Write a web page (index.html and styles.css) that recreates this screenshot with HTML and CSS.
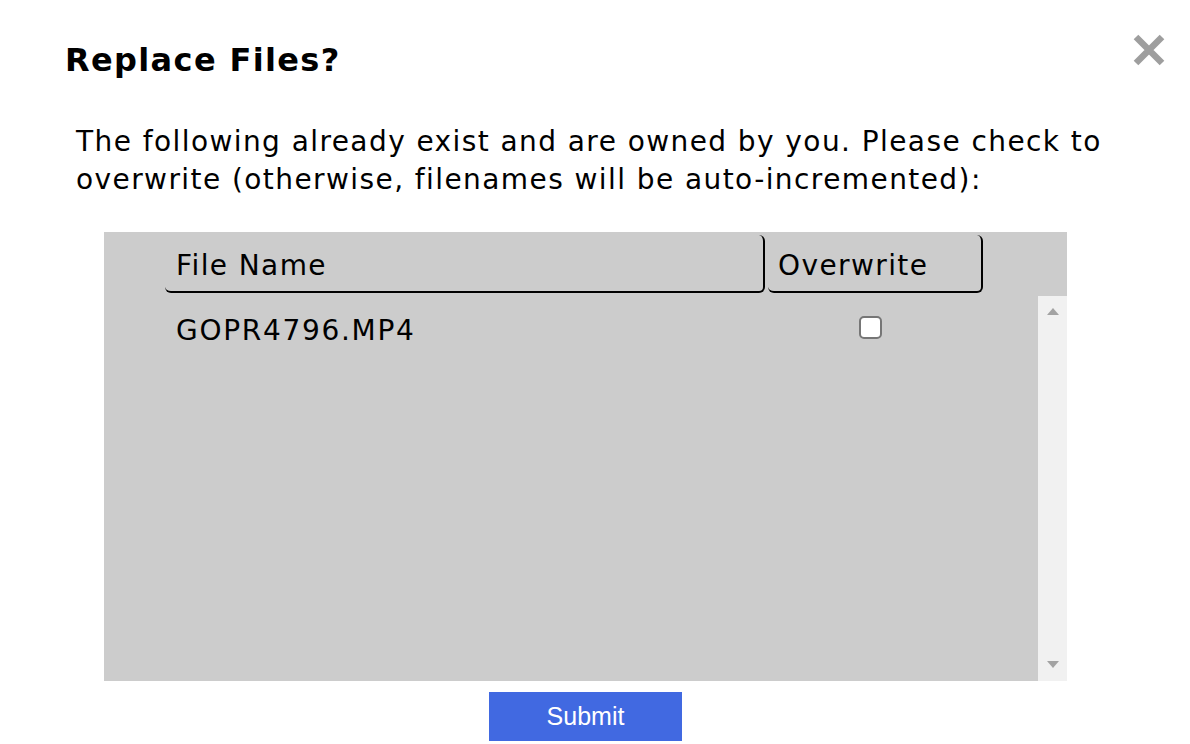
FILE: index.html
```html
<!DOCTYPE html>
<html lang="en">
<head>
<meta charset="utf-8">
<title>Replace Files?</title>
<link rel="stylesheet" href="styles.css">
</head>
<body>
<div class="dialog">
  <div class="dialog-header">
    <h1 class="dialog-title">Replace Files?</h1>
    <button class="close-btn" aria-label="Close">
      <svg width="34" height="34" viewBox="0 0 34 34"><path d="M4 4 L30 30 M30 4 L4 30" stroke="#9e9e9e" stroke-width="6.5" stroke-linecap="butt"/></svg>
    </button>
  </div>
  <p class="dialog-text">The following already exist and are owned by you. Please check to overwrite (otherwise, filenames will be auto-incremented):</p>
  <div class="panel">
    <div class="file-table">
      <div class="table-head">
        <div class="th th-name">File Name</div>
        <div class="th th-check">Overwrite</div>
      </div>
      <div class="table-body">
        <div class="rows">
          <div class="row">
            <div class="td td-name">GOPR4796.MP4</div>
            <div class="td td-check"><input type="checkbox" class="check"></div>
          </div>
        </div>
        <div class="scrollbar">
          <span class="arrow arrow-up"></span>
          <span class="arrow arrow-down"></span>
        </div>
      </div>
    </div>
    <div class="actions">
      <button class="submit-btn">Submit</button>
    </div>
  </div>
</div>
</body>
</html>
```
FILE: styles.css
```css
* { box-sizing: border-box; }
html, body { margin: 0; padding: 0; background: #fff; }
body {
  font-family: "DejaVu Sans", Verdana, sans-serif;
  color: #000;
  width: 1190px;
  height: 744px;
  overflow: hidden;
}
.dialog-header {
  display: flex;
  justify-content: space-between;
  align-items: flex-start;
  padding: 33px 24px 0 65px;
}
.dialog-title {
  margin: 9px 0 0 0;
  font-size: 32px;
  font-weight: bold;
  letter-spacing: 1.35px;
  line-height: 37px;
}
.close-btn {
  border: 0;
  background: none;
  padding: 0;
  width: 34px;
  height: 34px;
  cursor: pointer;
}
.close-btn svg { display: block; }
.dialog-text {
  margin: 44px 0 0 76px;
  width: 1070px;
  font-size: 28px;
  line-height: 38px;
  letter-spacing: 1.42px;
}
.panel {
  margin: 33px 0 0 104px;
  width: 963px;
}
.file-table {
  background: #cccccc;
  height: 449px;
  display: flex;
  flex-direction: column;
  padding-top: 3px;
}
.table-head {
  display: flex;
  gap: 3px;
  padding-left: 61px;
  height: 58px;
  flex: none;
}
.th {
  height: 58px;
  font-size: 28px;
  line-height: 33px;
  padding: 14px 10px 0 11px;
  border-right: 2px solid #000;
  border-bottom: 2px solid #000;
  border-radius: 6px;
  letter-spacing: 1.4px;
}
.th-name { width: 600px; }
.th-check { width: 215px; padding-left: 10px; }
.table-body {
  display: flex;
  flex: 1;
  margin-top: 3px;
}
.rows {
  flex: 1;
  padding-left: 61px;
}
.row {
  display: flex;
  height: 60px;
}
.td {
  font-size: 28px;
  line-height: 33px;
}
.td-name {
  width: 600px;
  padding: 18px 0 0 11px;
  letter-spacing: 1.7px;
}
.td-check {
  width: 211px;
  display: flex;
  justify-content: center;
  padding-top: 20px;
}
.check {
  appearance: none;
  -webkit-appearance: none;
  margin: 0;
  width: 23px;
  height: 23px;
  background: #fff;
  border: 2px solid #767676;
  border-radius: 5px;
}
.scrollbar {
  width: 29px;
  background: #f1f1f1;
  display: flex;
  flex-direction: column;
  justify-content: space-between;
  align-items: center;
  padding: 12px 0 13px;
}
.arrow {
  width: 0;
  height: 0;
  border-left: 6.5px solid transparent;
  border-right: 6.5px solid transparent;
}
.arrow-up { border-bottom: 7px solid #a3a3a3; }
.arrow-down { border-top: 7px solid #a3a3a3; }
.actions {
  display: flex;
  justify-content: center;
  padding-top: 11px;
}
.submit-btn {
  width: 193px;
  height: 49px;
  background: #4169e1;
  color: #fff;
  border: 0;
  font-family: "Liberation Sans", Arial, sans-serif;
  font-size: 25px;
  padding: 0;
}
```
